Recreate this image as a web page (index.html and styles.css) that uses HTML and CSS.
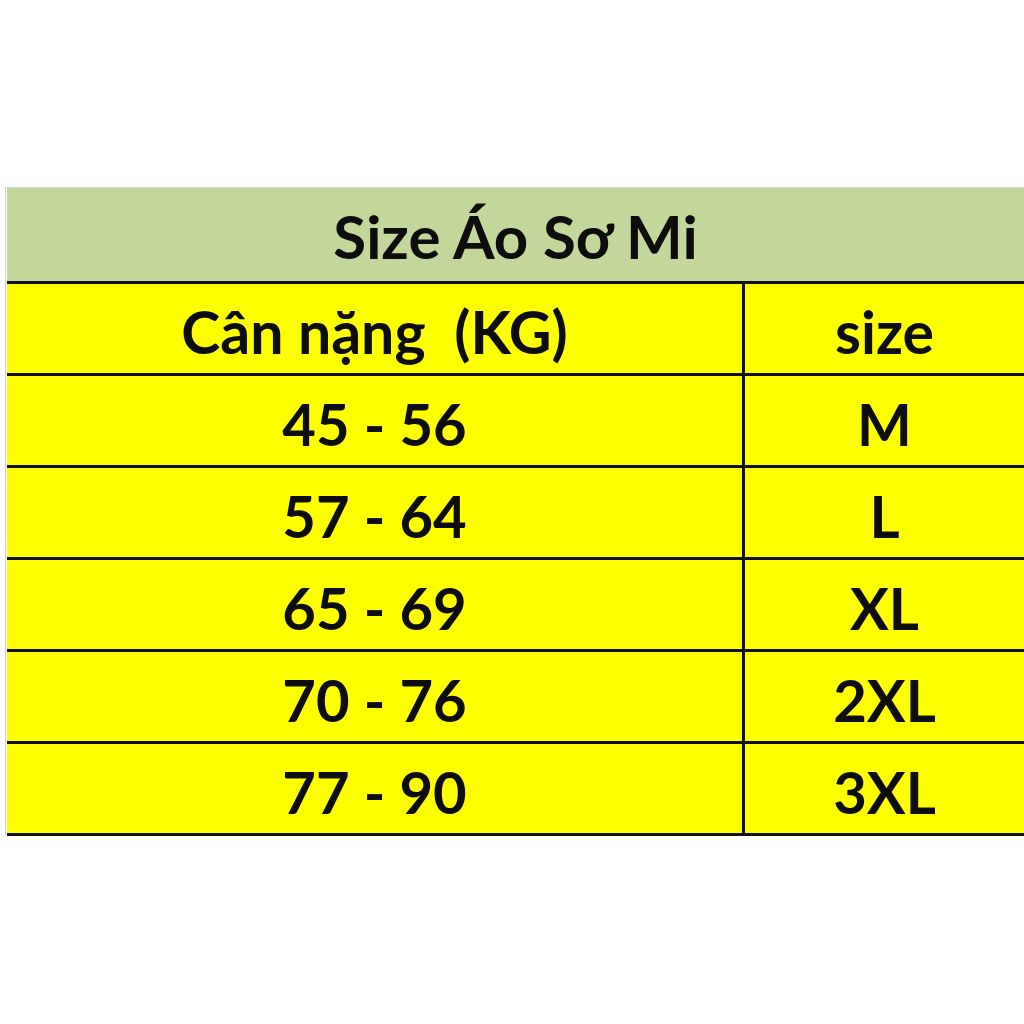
FILE: index.html
```html
<!DOCTYPE html>
<html lang="vi">
<head>
<meta charset="utf-8">
<link rel="stylesheet" href="styles.css">
</head>
<body>
<div class="page">
  <div class="sheet">
    <div class="title">Size Áo Sơ Mi</div>
    <div class="row head">
      <div class="cell left">Cân nặng&nbsp;&nbsp;(KG)</div>
      <div class="cell right">size</div>
    </div>
    <div class="row">
      <div class="cell left">45 - 56</div>
      <div class="cell right">M</div>
    </div>
    <div class="row">
      <div class="cell left">57 - 64</div>
      <div class="cell right">L</div>
    </div>
    <div class="row">
      <div class="cell left">65 - 69</div>
      <div class="cell right">XL</div>
    </div>
    <div class="row">
      <div class="cell left">70 - 76</div>
      <div class="cell right">2XL</div>
    </div>
    <div class="row last">
      <div class="cell left">77 - 90</div>
      <div class="cell right">3XL</div>
    </div>
  </div>
</div>
</body>
</html>
```

FILE: styles.css
```css
html, body {
  margin: 0;
  padding: 0;
  background: #ffffff;
}
.page {
  padding: 187px 0 0 5px;
  font-family: Lato, "Open Sans", "Liberation Sans", sans-serif;
  font-weight: 700;
  color: #0d0d0d;
}
.sheet {
  border-left: 1px solid #cfd3cf;
  border-top: 1px solid #d6d8d0;
  padding-left: 1px;
}
.title {
  height: 93px;
  background: #c4d79b;
  display: flex;
  align-items: center;
  justify-content: center;
  font-size: 60px;
  padding-top: 2px;
  box-sizing: border-box;
}
.row {
  display: grid;
  grid-template-columns: 735px 1fr;
  border-top: 3px solid #111111;
  height: 92px;
  box-sizing: border-box;
  background: #ffff00;
}
.row.last {
  height: 95px;
  border-bottom: 3px solid #111111;
}
.cell {
  display: flex;
  align-items: center;
  justify-content: center;
  font-size: 58px;
  padding-top: 6px;
}
.head .cell {
  font-size: 59px;
}
.cell.right {
  border-left: 3px solid #111111;
}
```
